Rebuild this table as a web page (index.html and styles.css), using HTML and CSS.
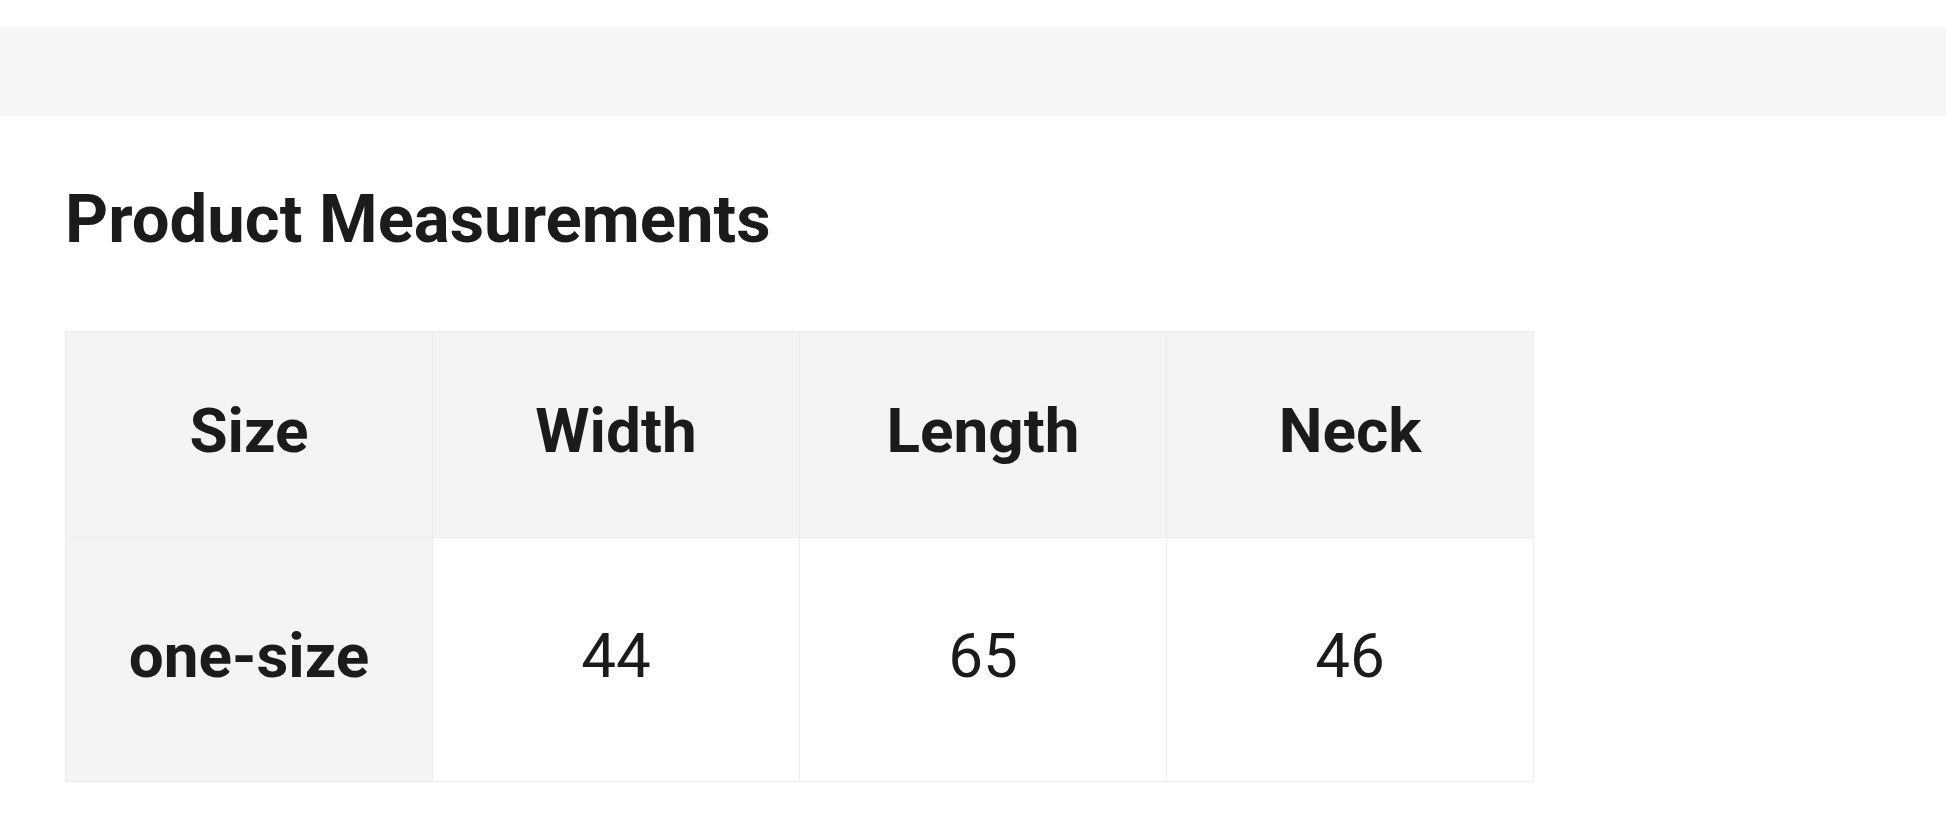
FILE: index.html
```html
<!DOCTYPE html>
<html lang="en">
<head>
<meta charset="utf-8">
<title>Product Measurements</title>
<link rel="stylesheet" href="styles.css">
</head>
<body>
<div class="band"></div>
<section class="measure">
  <h2 class="title">Product Measurements</h2>
  <table class="sizes">
    <thead>
      <tr>
        <th>Size</th>
        <th>Width</th>
        <th>Length</th>
        <th>Neck</th>
      </tr>
    </thead>
    <tbody>
      <tr>
        <th class="rowhead">one-size</th>
        <td>44</td>
        <td>65</td>
        <td>46</td>
      </tr>
    </tbody>
  </table>
</section>
</body>
</html>
```

FILE: styles.css
```css
html, body {
  margin: 0;
  padding: 0;
  background: #ffffff;
  font-family: Roboto, "Liberation Sans", sans-serif;
  color: #1b1b1b;
}

.band {
  margin-top: 27px;
  height: 89px;
  background: #f6f6f7;
}

.measure {
  padding: 0 0 0 65px;
}

.title {
  margin: 0;
  padding-top: 58px;
  font-size: 67px;
  line-height: 90px;
  font-weight: 700;
  color: #1b1b1b;
}

.sizes {
  margin-top: 67px;
  border-collapse: collapse;
  table-layout: fixed;
  width: 1469px;
}

.sizes th,
.sizes td {
  width: 367px;
  text-align: center;
  vertical-align: middle;
  border: 1px solid #ececec;
  padding: 0 0 8px;
  box-sizing: border-box;
}

.sizes thead th {
  height: 206px;
  background: #f5f4f4;
  font-size: 62px;
  font-weight: 700;
}

.sizes tbody th,
.sizes tbody td {
  height: 244px;
}

.sizes .rowhead {
  background: #f5f4f4;
  font-size: 62px;
  font-weight: 700;
}

.sizes td {
  background: #ffffff;
  font-size: 62px;
  font-weight: 400;
}
```
